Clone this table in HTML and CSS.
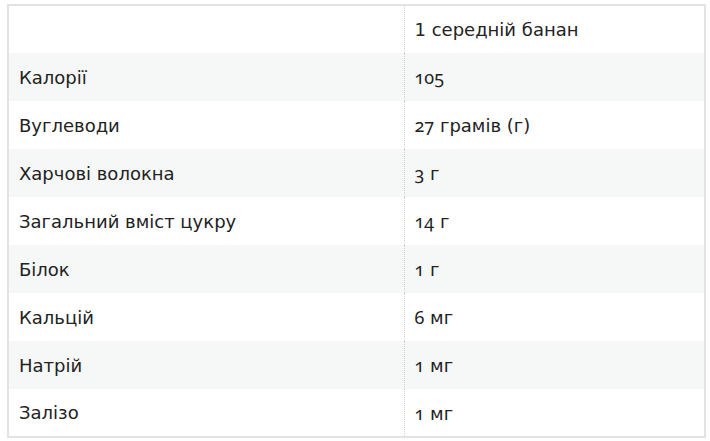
FILE: index.html
```html
<!DOCTYPE html>
<html lang="uk">
<head>
<meta charset="utf-8">
<link rel="stylesheet" href="styles.css">
</head>
<body>
<table class="nutri">
  <tr class="head"><td></td><td>1 середній банан</td></tr>
  <tr class="alt"><td>Калорії</td><td><span class="num">105</span></td></tr>
  <tr><td>Вуглеводи</td><td><span class="num">27</span> грамів (г)</td></tr>
  <tr class="alt"><td>Харчові волокна</td><td><span class="num">3</span> г</td></tr>
  <tr><td>Загальний вміст цукру</td><td><span class="num">14</span> г</td></tr>
  <tr class="alt"><td>Білок</td><td><span class="num">1</span> г</td></tr>
  <tr><td>Кальцій</td><td><span class="num">6</span> мг</td></tr>
  <tr class="alt"><td>Натрій</td><td><span class="num">1</span> мг</td></tr>
  <tr><td>Залізо</td><td><span class="num">1</span> мг</td></tr>
</table>
</body>
</html>
```
FILE: styles.css
```css
html, body {
  margin: 0;
  padding: 0;
  background: #ffffff;
}
body {
  padding: 4px 0 0 7px;
}
.nutri {
  border-collapse: collapse;
  width: 699px;
  border: 2px solid #e3e3e3;
  font-family: "DejaVu Sans", Verdana, sans-serif;
  font-size: 18px;
  color: #222222;
}
.nutri td {
  height: 48px;
  padding: 0 10px;
  box-sizing: border-box;
  vertical-align: middle;
}
.nutri td:first-child {
  width: 396px;
  border-right: 1px dotted #cfcfcf;
}
.nutri tr.alt td {
  background: #f6f7f7;
}
.num {
  font-family: "Noto Sans", "DejaVu Sans", sans-serif;
  font-variant-numeric: oldstyle-nums;
}
```
